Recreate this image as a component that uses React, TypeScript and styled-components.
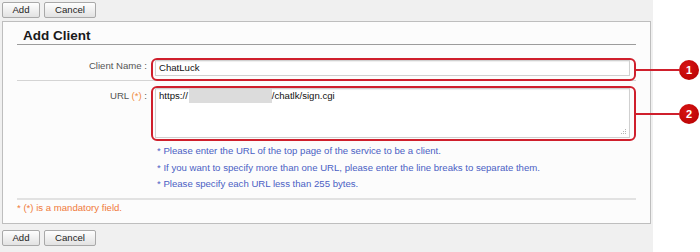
import * as React from "react"
import styled, { createGlobalStyle } from "styled-components"

const FONT = `"Liberation Sans", Arial, sans-serif`
const RED = "#cf1f2c"

const GlobalStyle = createGlobalStyle`
  html, body {
    margin: 0;
    padding: 0;
    background: #fff;
  }
  body {
    font-family: ${FONT};
  }
`

const Page = styled.div`
  width: 653px;
  height: 252px;
  box-sizing: border-box;
  padding: 2px 2px 0;
  background: #f0f0f0;
`

const Toolbar = styled.div<{ $top?: boolean }>`
  display: flex;
  gap: 4px;
  margin: ${(p) => (p.$top ? "0 0 3px" : "6px 0 0")};
`

const Button = styled.button<{ $w: number }>`
  width: ${(p) => p.$w}px;
  height: 16px;
  padding: 0;
  box-sizing: border-box;
  border: 1px solid #a9a9a9;
  border-radius: 2px;
  background: linear-gradient(#fefefe, #e2e2e2);
  font: 9.6px ${FONT};
  color: #222;
  line-height: 14px;
`

const Panel = styled.div`
  border: 1px solid #bebebe;
  background: #fcfcfc;
  padding: 0 14px;
`

const Title = styled.h2`
  margin: 0;
  padding: 6px 6px 1px;
  line-height: 16px;
  font: bold 13.5px ${FONT};
  color: #1a1a1a;
  border-bottom: 1px solid #9c9c9c;
`

const FieldRow = styled.div<{ $pt: number; $line: string }>`
  display: grid;
  grid-template-columns: 134px 1fr;
  align-items: start;
  padding-top: ${(p) => p.$pt}px;
  border-bottom: ${(p) => p.$line};
`

const Label = styled.div<{ $pt: number }>`
  padding: ${(p) => p.$pt}px 4px 0 0;
  text-align: right;
  font-size: 9.6px;
  line-height: 14px;
  color: #555;
  white-space: nowrap;
`

const Mark = styled.span`
  color: #f08a3a;
`

const Control = styled.div`
  display: flex;
  flex-direction: column;
`

const Highlight = styled.div<{ $pad: string; $mb?: number }>`
  position: relative;
  border: 2px solid ${RED};
  border-radius: 6px;
  padding: ${(p) => p.$pad};
  margin-bottom: ${(p) => p.$mb ?? 0}px;
`

const Input = styled.div`
  height: 16px;
  box-sizing: border-box;
  border: 1px solid #d0d0d0;
  box-shadow: inset 0 1px 1px rgba(0, 0, 0, 0.07);
  background: #fff;
  padding: 0 3px;
  font-size: 9.6px;
  line-height: 13px;
  color: #111;
`

const TextBox = styled.div`
  position: relative;
  height: 50px;
  box-sizing: border-box;
  border: 1px solid #d0d0d0;
  box-shadow: inset 0 1px 1px rgba(0, 0, 0, 0.07);
  background: #fff;
  padding: 0 3px;
  font-size: 9.6px;
  line-height: 14px;
  color: #111;
`

const Redacted = styled.span`
  display: inline-block;
  vertical-align: top;
  width: 83px;
  height: 14px;
  margin-left: 1px;
  background: #dcdcdc;
`

const Grip = styled.svg`
  position: absolute;
  right: 2px;
  bottom: 2px;
`

const Callout = styled.div`
  position: absolute;
  left: calc(100% + 2px);
  top: 50%;
  transform: translateY(-50%);
  display: flex;
  align-items: center;
`

const Leader = styled.div`
  width: 43px;
  height: 2px;
  background: ${RED};
`

const Badge = styled.div`
  width: 20px;
  height: 20px;
  border-radius: 50%;
  background: radial-gradient(circle at 40% 35%, #d81414, #b30000);
  color: #fff;
  font: bold 11px ${FONT};
  display: flex;
  align-items: center;
  justify-content: center;
`

const HelpList = styled.div`
  margin-top: 2px;
  padding: 0 0 5.5px 6px;
`

const Help = styled.div`
  font-size: 9.6px;
  line-height: 16.5px;
  color: #4b5fc4;
  white-space: nowrap;
`

const Footer = styled.div`
  padding-bottom: 7px;
  font-size: 9.6px;
  line-height: 16px;
  color: #f07a3a;
`

const helps = [
  "* Please enter the URL of the top page of the service to be a client.",
  "* If you want to specify more than one URL, please enter the line breaks to separate them.",
  "* Please specify each URL less than 255 bytes.",
]

const Actions = ({ top }: { top?: boolean }) => (
  <Toolbar $top={top}>
    <Button $w={38}>Add</Button>
    <Button $w={52}>Cancel</Button>
  </Toolbar>
)

export default function App() {
  return (
    <Page>
      <GlobalStyle />
      <Actions top />
      <Panel>
        <Title>Add Client</Title>
        <FieldRow $pt={13} $line="1px solid #d4d4d4">
          <Label $pt={1}>Client Name :</Label>
          <Control>
            <Highlight $pad="0 4px 3px 2px" $mb={-1}>
              <Input>ChatLuck</Input>
              <Callout>
                <Leader />
                <Badge>1</Badge>
              </Callout>
            </Highlight>
          </Control>
        </FieldRow>
        <FieldRow $pt={5} $line="2px solid #e2e2e2">
          <Label $pt={3}>
            URL <Mark>(*)</Mark> :
          </Label>
          <Control>
            <Highlight $pad="0 4px 1px 2px">
              <TextBox>
                https://
                <Redacted />
                /chatlk/sign.cgi
                <Grip width="7" height="7" viewBox="0 0 7 7">
                  <g fill="#b5b5b5">
                    <rect x="5" y="1" width="1" height="1" />
                    <rect x="3" y="3" width="1" height="1" />
                    <rect x="5" y="3" width="1" height="1" />
                    <rect x="1" y="5" width="1" height="1" />
                    <rect x="3" y="5" width="1" height="1" />
                    <rect x="5" y="5" width="1" height="1" />
                  </g>
                </Grip>
              </TextBox>
              <Callout>
                <Leader />
                <Badge>2</Badge>
              </Callout>
            </Highlight>
            <HelpList>
              {helps.map((h) => (
                <Help key={h}>{h}</Help>
              ))}
            </HelpList>
          </Control>
        </FieldRow>
        <Footer>* (*) is a mandatory field.</Footer>
      </Panel>
      <Actions />
    </Page>
  )
}
